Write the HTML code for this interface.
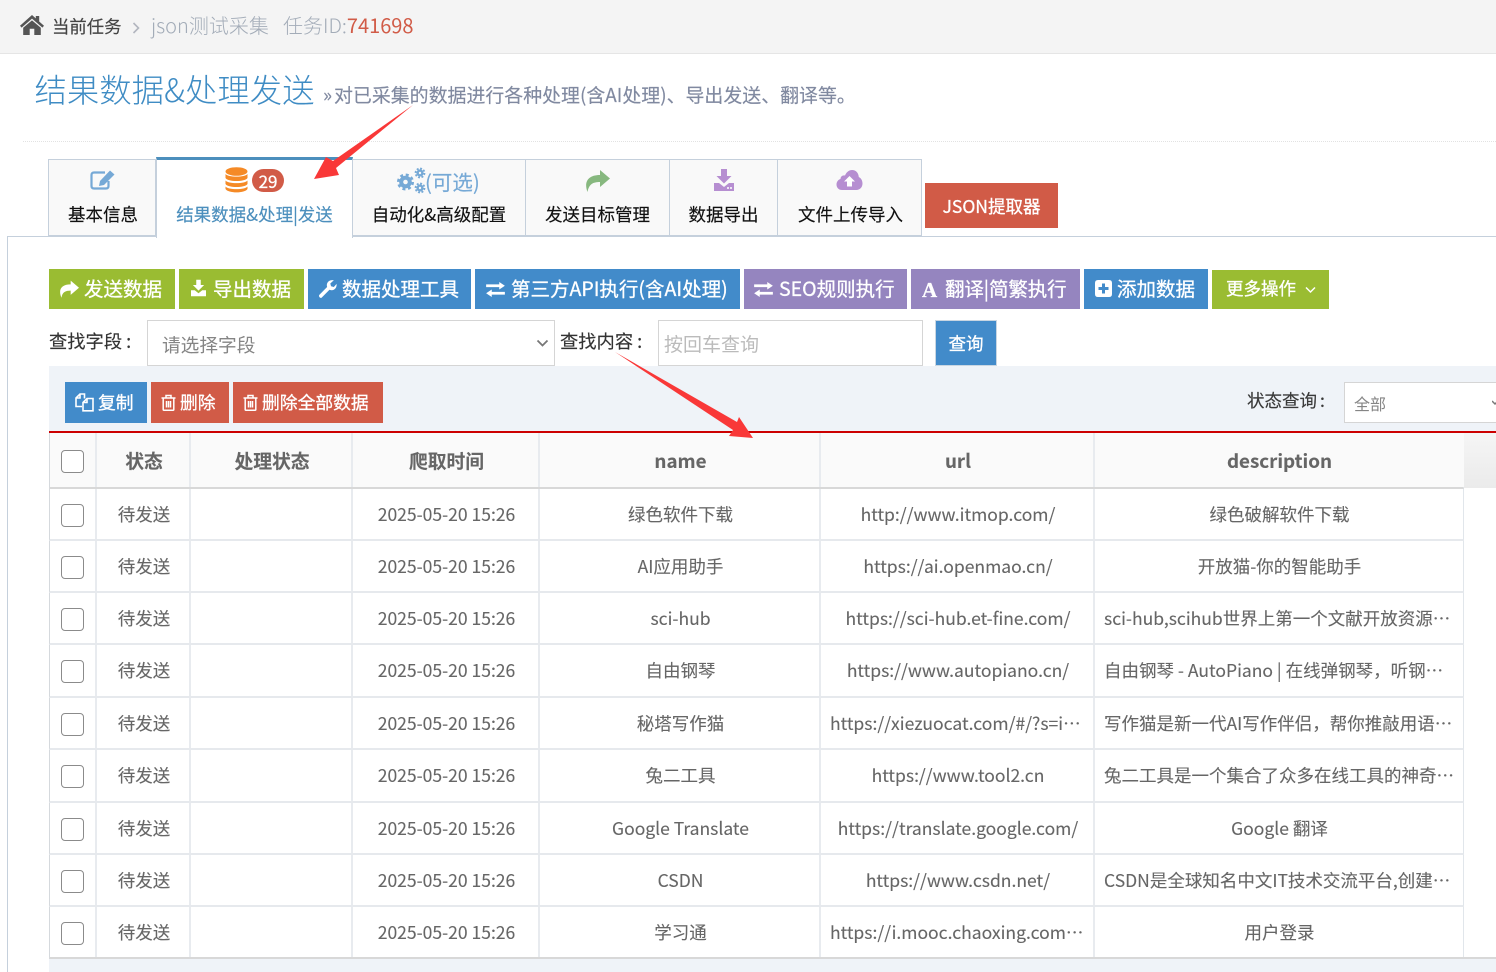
<!DOCTYPE html>
<html lang="zh-CN">
<head>
<meta charset="utf-8">
<title>结果数据&amp;处理发送</title>
<style>
*{box-sizing:border-box;margin:0;padding:0}
html,body{width:1496px;height:972px;overflow:hidden;background:#fff}
body{position:relative;font-family:"Noto Sans CJK SC","Liberation Sans",sans-serif;color:#393939}
.a{position:absolute;white-space:nowrap}
svg{display:block;position:absolute}
.tab{position:absolute;top:159px;height:78px;background:#f9f9f9;border:1px solid #c5d0dc;border-bottom:2px solid #c5d0dc;border-left:0;color:#111;font-size:17.5px;text-align:center;line-height:24px;-webkit-text-stroke:.15px}
.tab span{position:absolute;left:0;right:0;top:43px}
.btn{position:absolute;color:#fff;white-space:nowrap;-webkit-text-stroke:.3px #fff}
.btn span{position:absolute;top:0;white-space:nowrap}
.g{background:#9abc32}.b{background:#428bca}.p{background:#9585bf}.r{background:#d15b47}
.t{top:269px;height:40px;font-size:19.5px;line-height:38px}
.d{top:382px;height:41px;font-size:17.8px;line-height:40px}
.row{position:absolute;left:49px;width:1415px;background:#fff;border-left:1px solid #d5d9dd;border-right:1px solid #e1e6eb;border-bottom:2px solid #e6e9ed}
.row div{position:absolute;top:0;height:100%;padding-left:2px;text-align:center;font-size:17.5px;color:#666;white-space:nowrap;overflow:hidden;border-right:2px solid #e8ebef;-webkit-text-stroke:.12px #666}
.c1{left:0;width:47px}.c2{left:47px;width:94px}.c3{left:141px;width:162px}.c4{left:303px;width:187px}.c5{left:490px;width:281px}.c6{left:771px;width:274px}.c7{left:1045px;width:369px;padding-left:0!important;border-right:0!important}
.row div.l{text-align:left;padding-left:9px!important}
.row i{position:absolute;left:11px;top:15px;width:23px;height:23px;border:1.5px solid #8b8b8b;border-radius:4px;background:#fff}
.row div b{font-weight:400;display:block;line-height:52px}
.hd div b{font-weight:700;line-height:55px;font-size:18.8px;color:#666}
.hd{background:#fafafa;border-bottom:2px solid #d8d8d8}
.hd div{background:#fafafa}
.c{margin-left:4px}
</style>
</head>
<body>
<!-- top bar -->
<div class="a" style="left:0;top:0;width:1496px;height:54px;background:#f4f4f4;border-bottom:1px solid #e5e5e5"></div>
<svg style="left:20px;top:15px" width="24" height="20" viewBox="0 0 24 20"><path fill="#555" d="M12 0 L15.800 3.400 V1 H19.200 V6.500 L24 10.800 L22.400 12.600 L12 3.600 L1.600 12.600 L0 10.800 Z M12 5.400 L20.800 12.800 V20 H14.300 V13.800 H9.700 V20 H3.200 V12.800 Z"/></svg>
<div class="a" style="left:52px;top:14px;font-size:17.4px;line-height:26px;color:#444;-webkit-text-stroke:.15px">当前任务</div>
<svg style="left:131px;top:21px" width="10" height="14" viewBox="0 0 10 14"><path fill="none" stroke="#b2b6bf" stroke-width="1.6" d="M2.5 2 L7.5 7 L2.5 12"/></svg>
<div class="a" style="left:151px;top:10px;font-size:20px;line-height:30px;color:#a3acb8;font-weight:300">json测试采集</div>
<div class="a" style="left:283px;top:10px;font-size:20px;line-height:30px;color:#a3acb8;font-weight:300">任务ID:<span style="color:#d15b47;font-weight:400">741698</span></div>

<!-- page header -->
<div class="a" style="left:34.5px;top:65px;font-size:32.4px;line-height:48px;color:#3f8cc4;font-weight:300">结果数据&amp;处理发送</div>
<div class="a" style="left:323px;top:81px;font-size:18.93px;line-height:28px;color:#8089a0;-webkit-text-stroke:.15px"><span style="display:inline-block;width:11px">»</span>对已采集的数据进行各种处理(含AI处理)、导出发送、翻译等。</div>
<div class="a" style="left:23px;top:141px;width:1473px;border-top:1px dotted #e2e2e2"></div>

<!-- tab panel -->
<div class="a" style="left:7px;top:236px;width:1489px;height:736px;border-top:1px solid #c5d0dc;border-left:1px solid #c5d0dc;background:#fff"></div>

<div class="tab" style="left:48px;width:108px;border-left:1px solid #c5d0dc"><span style="left:1px;right:-1px">基本信息</span>
<svg style="left:41px;top:9px" width="26" height="22" viewBox="0 0 26 22"><path fill="none" stroke="#76a9d6" stroke-width="2.2" d="M15 3.500 H4 Q1.500 3.500 1.500 6 V17 Q1.500 19.500 4 19.500 H16 Q18.500 19.500 18.500 17 V12"/><path fill="#76a9d6" d="M20 1.500 L24.500 5.500 L14 16 L9 17 L10 12 Z"/></svg>
</div>
<div class="tab" style="left:156px;width:197px;top:157px;height:81px;background:#fff;border-top:3px solid #4c8fbd;border-bottom:0;border-left:1px solid #c5d0dc;color:#4c8fbd;z-index:2"><span>结果数据&amp;处理|发送</span>
<svg style="left:68px;top:7px" width="23" height="26" viewBox="0 0 23 26"><g fill="#f58a26"><ellipse cx="11.500" cy="4.500" rx="11" ry="4.300"/><path d="M0.500 7 C3 10.500 20 10.500 22.500 7 V11 C20 15 3 15 0.500 11 Z"/><path d="M0.500 13.500 C3 17 20 17 22.500 13.500 V17 C20 21 3 21 0.500 17 Z"/><path d="M0.500 19.500 C3 23 20 23 22.500 19.500 V22 C20 26.500 3 26.500 0.500 22 Z"/></g></svg>
<div style="position:absolute;left:95px;top:9px;width:32px;height:23px;border-radius:12px;background:#d15b47;color:#fff;font-size:17px;line-height:23px;text-align:center;-webkit-text-stroke:.3px #fff">29</div>
</div>
<div class="tab" style="left:353px;width:173px"><span>自动化&amp;高级配置</span>
<svg style="left:45px;top:9px;overflow:visible" width="29" height="25" viewBox="0 0 29 25"><g fill="none" stroke="#76a9d6"><circle cx="7.500" cy="13" r="4.300" stroke-width="4"/><circle cx="7.500" cy="13" r="7" stroke-width="3" stroke-dasharray="2.900 2.600"/><circle cx="22" cy="4" r="2.400" stroke-width="2.400"/><circle cx="22" cy="4" r="4.400" stroke-width="2" stroke-dasharray="1.900 1.550"/><circle cx="22" cy="19" r="2.400" stroke-width="2.400"/><circle cx="22" cy="19" r="4.400" stroke-width="2" stroke-dasharray="1.900 1.550"/></g></svg>
<div style="position:absolute;left:72px;top:6px;font-size:20.500px;line-height:30px;color:#76a9d6">(可选)</div>
</div>
<div class="tab" style="left:526px;width:144px"><span>发送目标管理</span>
<svg style="left:59px;top:9px" width="26" height="24" viewBox="0 0 26 24"><path fill="#87b87f" d="M15 1 L25 9.500 L15 18 V13 C8 13 4 15 2.500 23 C-1 14 2 6 15 6 Z"/></svg>
</div>
<div class="tab" style="left:670px;width:108px"><span>数据导出</span>
<svg style="left:42px;top:8px" width="24" height="24" viewBox="0 0 24 24"><path fill="#b68ed1" d="M9 1 H15 V8 H19.500 L12 15.500 L4.500 8 H9 Z M2 15 H7 L12 19 L17 15 H22 V23 H2 Z"/><circle cx="16" cy="20" r="1" fill="#fff"/><circle cx="19" cy="20" r="1" fill="#fff"/></svg>
</div>
<div class="tab" style="left:778px;width:144px"><span style="left:1px;right:-1px">文件上传导入</span>
<svg style="left:58px;top:9px" width="27" height="22" viewBox="0 0 27 22"><path fill="#b68ed1" d="M6 21 C2.500 21 0.500 18.500 0.500 15.500 C0.500 12.500 2.500 10.500 4.500 10 C4.500 7.500 6.500 6 9 6.500 C10.500 3 13 1 16 1 C20 1 22.500 4 22.800 8 C25 9 26.500 11.500 26.500 14.500 C26.500 18.500 23.500 21 20.500 21 Z"/><path fill="#fff" d="M13.500 7 L19 12.500 H16 V17.500 H11 V12.500 H8 Z"/></svg>
</div>
<div class="btn r" style="left:925px;top:183px;width:133px;height:45px;font-size:17.500px;line-height:47px;text-align:center">JSON提取器</div>

<!-- toolbar -->
<div class="btn g t" style="left:49px;width:126px"><svg style="left:10px;top:11px" width="20" height="18" viewBox="0 0 24 21"><path fill="#fff" d="M14 0.500 L24 9 L14 17.500 V12.500 C8 12.500 4 14 3 21 C-1 12 2 5 14 5 Z"/></svg><span style="left:35px">发送数据</span></div>
<div class="btn g t" style="left:179px;width:125px"><svg style="left:10px;top:10px" width="19" height="18" viewBox="0 0 24 24"><path fill="#fff" d="M9 1 H15 V8 H19.500 L12 15.500 L4.500 8 H9 Z M2 15 H7 L12 19 L17 15 H22 V23 H2 Z"/></svg><span style="left:34px">导出数据</span></div>
<div class="btn b t" style="left:308px;width:163px"><svg style="left:10px;top:10px" width="19" height="20" viewBox="0 0 24 24"><path fill="#fff" d="M1.500 19.500 L11.500 9.500 C10 4 14 0 20 1 L15.500 5 L16.500 8.500 L20 9.500 L23.500 5.500 C24 11 20 15 14.500 13 L4.500 23 C3 24 0.500 21.500 1.500 19.500 Z"/></svg><span style="left:34px">数据处理工具</span></div>
<div class="btn b t" style="left:475px;width:265px"><svg style="left:11px;top:13px" width="19" height="15" viewBox="0 0 20 16"><path fill="#fff" d="M14 0 L20 4 L14 8 V5.500 H0 V2.500 H14 Z M6 8 V10.500 H20 V13.500 H6 V16 L0 12 Z"/></svg><span style="left:36px">第三方API执行(含AI处理)</span></div>
<div class="btn p t" style="left:744px;width:163px"><svg style="left:10px;top:13px" width="19" height="15" viewBox="0 0 20 16"><path fill="#fff" d="M14 0 L20 4 L14 8 V5.500 H0 V2.500 H14 Z M6 8 V10.500 H20 V13.500 H6 V16 L0 12 Z"/></svg><span style="left:35px">SEO规则执行</span></div>
<div class="btn p t" style="left:911px;width:169px"><div style="position:absolute;left:11px;top:1px;font-family:'Liberation Serif',serif;font-weight:700;font-size:21px;line-height:40px">A</div><span style="left:34px;font-size:19.500px;letter-spacing:-.1px">翻译|简繁执行</span></div>
<div class="btn b t" style="left:1084px;width:124px"><svg style="left:11px;top:11px" width="17" height="17" viewBox="0 0 17 17"><path fill="#fff" fill-rule="evenodd" d="M3 0 H14 Q17 0 17 3 V14 Q17 17 14 17 H3 Q0 17 0 14 V3 Q0 0 3 0 Z M7 3.500 V7 H3.500 V10 H7 V13.500 H10 V10 H13.500 V7 H10 V3.500 Z"/></svg><span style="left:33px">添加数据</span></div>
<div class="btn g" style="left:1212px;top:270px;width:117px;height:39px;font-size:17.500px;line-height:38px"><span style="left:14px">更多操作</span><svg style="left:93px;top:16px" width="11" height="8" viewBox="0 0 11 8"><path fill="none" stroke="#fff" stroke-width="1.500" d="M1 1.500 L5.500 6 L10 1.500"/></svg></div>

<!-- search row -->
<div class="a" style="left:49px;top:327px;font-size:18.300px;line-height:28px;color:#333;-webkit-text-stroke:.15px">查找字段<span class="c">:</span></div>
<div class="a" style="left:147px;top:320px;width:408px;height:46px;background:#fff;border:1px solid #d5d5d5"></div>
<div class="a" style="left:162px;top:331px;font-size:18.700px;line-height:28px;color:#858585">请选择字段</div>
<svg style="left:536px;top:339px" width="13" height="9" viewBox="0 0 13 9"><path fill="none" stroke="#777" stroke-width="1.800" d="M1.500 1.500 L6.500 6.500 L11.500 1.500"/></svg>
<div class="a" style="left:560px;top:327px;font-size:18.300px;line-height:28px;color:#333;-webkit-text-stroke:.15px">查找内容<span class="c">:</span></div>
<div class="a" style="left:658px;top:320px;width:265px;height:46px;background:#fff;border:1px solid #d5d5d5"></div>
<div class="a" style="left:664px;top:330px;font-size:19px;line-height:28px;color:#bbb">按回车查询</div>
<div class="btn b" style="left:935px;top:320px;width:62px;height:46px;border:1px solid #c9d6e2;font-size:17.500px;line-height:45px;text-align:center">查询</div>

<!-- gray area -->
<div class="a" style="left:49px;top:366px;width:1447px;height:606px;background:#eff3f8"></div>
<div class="btn b d" style="left:65px;width:82px"><svg style="left:10px;top:11px" width="19" height="19" viewBox="0 0 19 19"><path fill="none" stroke="#fff" stroke-width="1.600" d="M7 13.500 H1 V5 L5 1 H9.500 V5.500 M5 1.300 V5 H1.300 M8 17.800 V9.500 L12 5.500 H18 V17.800 Z M12 5.800 V9.500 H8.300"/></svg><span style="left:33px">复制</span></div>
<div class="btn r d" style="left:151px;width:78px"><svg style="left:10px;top:12px" width="15" height="17" viewBox="0 0 15 17"><path fill="none" stroke="#fff" stroke-width="1.500" d="M0.500 4 H14.500 M5 4 V1.500 H10 V4 M2.200 4 V15.500 Q2.200 16.200 3 16.200 H12 Q12.800 16.200 12.800 15.500 V4 M5.500 7 V13.500 M7.500 7 V13.500 M9.500 7 V13.500"/></svg><span style="left:29px">删除</span></div>
<div class="btn r d" style="left:233px;width:150px"><svg style="left:10px;top:12px" width="15" height="17" viewBox="0 0 15 17"><path fill="none" stroke="#fff" stroke-width="1.500" d="M0.500 4 H14.500 M5 4 V1.500 H10 V4 M2.200 4 V15.500 Q2.200 16.200 3 16.200 H12 Q12.800 16.200 12.800 15.500 V4 M5.500 7 V13.500 M7.500 7 V13.500 M9.500 7 V13.500"/></svg><span style="left:29px">删除全部数据</span></div>
<div class="a" style="left:1247px;top:388px;font-size:17.500px;line-height:26px;color:#393939;-webkit-text-stroke:.15px">状态查询<span style="margin-left:3px">:</span></div>
<div class="a" style="left:1344px;top:382px;width:160px;height:41px;background:#fff;border:1px solid #d5d5d5"></div>
<div class="a" style="left:1354px;top:390px;font-size:16px;line-height:26px;color:#858585">全部</div>
<svg style="left:1492px;top:400px" width="6" height="6" viewBox="0 0 6 6"><path fill="none" stroke="#777" stroke-width="1.500" d="M0 1 L3 4 L6 1"/></svg>

<!-- table -->
<div class="a" style="left:49px;top:431px;width:1447px;height:2px;background:#c00"></div>
<div class="a" style="left:1463px;top:433px;width:33px;height:55px;background:linear-gradient(#f5f5f5,#ebebeb)"></div>
<div class="a" style="left:1463px;top:488px;width:33px;height:470px;background:#fff"></div>

<div class="row hd" style="top:433px;height:56px"><div class="c1"><i style="top:17px"></i></div><div class="c2"><b>状态</b></div><div class="c3"><b>处理状态</b></div><div class="c4"><b>爬取时间</b></div><div class="c5"><b>name</b></div><div class="c6"><b>url</b></div><div class="c7"><b>description</b></div></div>

<div class="row" style="top:489px;height:52px"><div class="c1"><i></i></div><div class="c2"><b>待发送</b></div><div class="c3"></div><div class="c4"><b>2025-05-20 15:26</b></div><div class="c5"><b>绿色软件下载</b></div><div class="c6"><b>http://www.itmop.com/</b></div><div class="c7"><b>绿色破解软件下载</b></div></div>
<div class="row" style="top:541px;height:52px"><div class="c1"><i></i></div><div class="c2"><b>待发送</b></div><div class="c3"></div><div class="c4"><b>2025-05-20 15:26</b></div><div class="c5"><b>AI应用助手</b></div><div class="c6"><b>https://ai.openmao.cn/</b></div><div class="c7"><b>开放猫-你的智能助手</b></div></div>
<div class="row" style="top:593px;height:52px"><div class="c1"><i></i></div><div class="c2"><b>待发送</b></div><div class="c3"></div><div class="c4"><b>2025-05-20 15:26</b></div><div class="c5"><b>sci-hub</b></div><div class="c6"><b>https://sci-hub.et-fine.com/</b></div><div class="c7 l"><b>sci-hub,scihub世界上第一个文献开放资源⋯</b></div></div>
<div class="row" style="top:645px;height:53px"><div class="c1"><i></i></div><div class="c2"><b>待发送</b></div><div class="c3"></div><div class="c4"><b>2025-05-20 15:26</b></div><div class="c5"><b>自由钢琴</b></div><div class="c6"><b>https://www.autopiano.cn/</b></div><div class="c7 l"><b>自由钢琴 - AutoPiano | 在线弹钢琴，听钢⋯</b></div></div>
<div class="row" style="top:698px;height:52px"><div class="c1"><i></i></div><div class="c2"><b>待发送</b></div><div class="c3"></div><div class="c4"><b>2025-05-20 15:26</b></div><div class="c5"><b>秘塔写作猫</b></div><div class="c6 l"><b>https://xiezuocat.com/#/?s=i⋯</b></div><div class="c7 l"><b>写作猫是新一代AI写作伴侣，帮你推敲用语⋯</b></div></div>
<div class="row" style="top:750px;height:53px"><div class="c1"><i></i></div><div class="c2"><b>待发送</b></div><div class="c3"></div><div class="c4"><b>2025-05-20 15:26</b></div><div class="c5"><b>兔二工具</b></div><div class="c6"><b>https://www.tool2.cn</b></div><div class="c7 l"><b>兔二工具是一个集合了众多在线工具的神奇⋯</b></div></div>
<div class="row" style="top:803px;height:52px"><div class="c1"><i></i></div><div class="c2"><b>待发送</b></div><div class="c3"></div><div class="c4"><b>2025-05-20 15:26</b></div><div class="c5"><b>Google Translate</b></div><div class="c6"><b>https://translate.google.com/</b></div><div class="c7"><b>Google 翻译</b></div></div>
<div class="row" style="top:855px;height:52px"><div class="c1"><i></i></div><div class="c2"><b>待发送</b></div><div class="c3"></div><div class="c4"><b>2025-05-20 15:26</b></div><div class="c5"><b>CSDN</b></div><div class="c6"><b>https://www.csdn.net/</b></div><div class="c7 l"><b>CSDN是全球知名中文IT技术交流平台,创建⋯</b></div></div>
<div class="row" style="top:907px;height:52px;border-bottom:2px solid #d8d8d8"><div class="c1"><i></i></div><div class="c2"><b>待发送</b></div><div class="c3"></div><div class="c4"><b>2025-05-20 15:26</b></div><div class="c5"><b>学习通</b></div><div class="c6 l"><b>https://i.mooc.chaoxing.com⋯</b></div><div class="c7"><b>用户登录</b></div></div>
<div class="a" style="left:1463px;top:957px;width:33px;height:2px;background:#d8d8d8"></div>

<!-- red annotation arrows -->
<svg style="left:0;top:0;z-index:5;pointer-events:none" width="1496" height="972" viewBox="0 0 1496 972">
<polygon fill="#f93838" points="413,105 333,161 326,157 314,179 339,175 336,168"/>
<polygon fill="#f93838" points="615,352 737,422 739,417 753,438 729,436 733,430"/>
</svg>
</body>
</html>
